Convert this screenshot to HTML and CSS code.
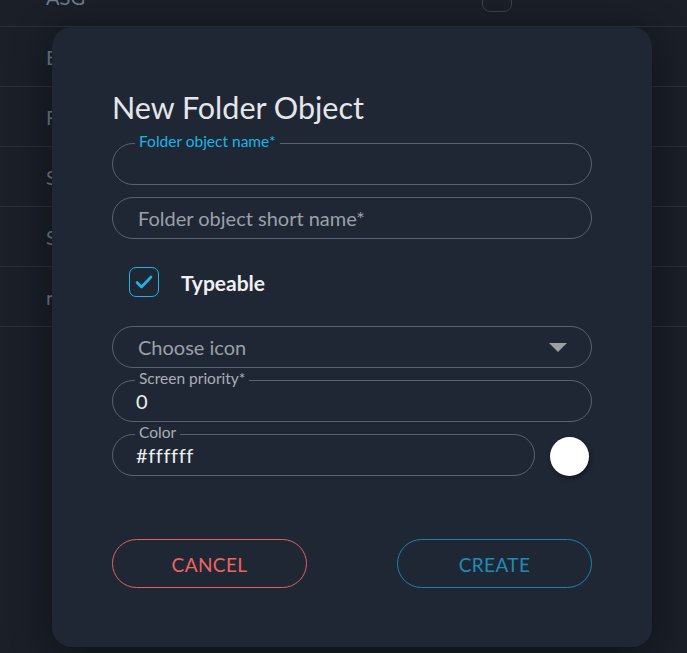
FILE: index.html
```html
<!DOCTYPE html>
<html lang="en">
<head>
<meta charset="utf-8">
<title>New Folder Object</title>
<link rel="stylesheet" href="styles.css">
</head>
<body>
<div class="page">
  <ul class="list">
    <li class="row"><span class="row-name">ASG</span><span class="row-check"></span></li>
    <li class="row"><span class="row-name">Engineering</span><span class="row-check"></span></li>
    <li class="row"><span class="row-name">Finance</span><span class="row-check"></span></li>
    <li class="row"><span class="row-name">Sales</span><span class="row-check"></span></li>
    <li class="row"><span class="row-name">Support</span><span class="row-check"></span></li>
    <li class="row"><span class="row-name">root</span><span class="row-check"></span></li>
  </ul>

  <div class="dialog">
    <h1 class="title">New Folder Object</h1>

    <div class="field focused">
      <span class="float-label">Folder object name*</span>
    </div>

    <div class="field gap">
      <span class="placeholder">Folder object short name*</span>
    </div>

    <label class="check-row">
      <span class="checkbox">
        <svg width="20" height="16" viewBox="0 0 20 16"><path d="M3 8.5 L7.5 13 L17 3" fill="none" stroke="#1ab4e8" stroke-width="2.6" stroke-linecap="round" stroke-linejoin="round"/></svg>
      </span>
      <span class="check-text">Typeable</span>
    </label>

    <div class="field select">
      <span class="placeholder">Choose icon</span>
      <span class="arrow"></span>
    </div>

    <div class="field gap">
      <span class="float-label muted">Screen priority*</span>
      <span class="value">0</span>
    </div>

    <div class="color-row">
      <div class="field color-field">
        <span class="float-label muted">Color</span>
        <span class="value">#ffffff</span>
      </div>
      <span class="swatch"></span>
    </div>

    <div class="actions">
      <button class="btn cancel">CANCEL</button>
      <button class="btn create">CREATE</button>
    </div>
  </div>
</div>
</body>
</html>
```
FILE: styles.css
```css
* { box-sizing: border-box; }
html, body { margin: 0; padding: 0; }
body {
  width: 687px;
  height: 653px;
  overflow: hidden;
  background: #1a1f28;
  font-family: Lato, "Noto Sans", sans-serif;
}
.page {
  position: relative;
  width: 687px;
  height: 653px;
  overflow: hidden;
  background: #1a1f28;
}
.list {
  list-style: none;
  margin: -33px 0 0 0;
  padding: 0;
}
.row {
  height: 60px;
  border-bottom: 1px solid #2b313c;
  display: flex;
  align-items: center;
  padding-left: 46px;
  position: relative;
}
.row-name {
  color: #6f7a8c;
  font-size: 20px;
  flex: 1;
}
.row-check {
  width: 30px;
  height: 30px;
  border: 1px solid #3a414e;
  border-radius: 8px;
  margin-right: 175px;
}
.dialog {
  position: absolute;
  left: 52px;
  top: 27px;
  width: 600px;
  height: 620px;
  background: #202734;
  border-radius: 20px;
  box-shadow: 0 8px 40px rgba(0, 0, 0, 0.45);
  padding: 63px 60px 0 60px;
}
.title {
  margin: 0;
  font-size: 30.5px;
  line-height: 34px;
  font-weight: 400;
  color: #e4e6ea;
}
.field {
  position: relative;
  height: 42px;
  border: 1px solid #596170;
  border-radius: 21px;
  display: flex;
  align-items: center;
  padding: 0 24px;
  margin-top: 19px;
}
.field.gap { margin-top: 12px; }
.float-label {
  position: absolute;
  left: 22px;
  top: -12px;
  padding: 0 4px;
  background: #202734;
  font-size: 15.5px;
  line-height: 18px;
  color: #1ab4e8;
}
.float-label.muted { color: #a9aeb6; }
.placeholder {
  font-size: 20px;
  color: #9aa0a9;
  margin-left: 1px;
  margin-bottom: 1px;
}
.value {
  font-size: 20px;
  letter-spacing: 0.6px;
  color: #eceef0;
  margin-left: -1px;
}
.check-row {
  display: flex;
  align-items: center;
  margin-top: 28px;
  padding-left: 17px;
  height: 30px;
}
.checkbox {
  width: 30px;
  height: 30px;
  border: 1.5px solid #1ab4e8;
  border-radius: 7px;
  display: flex;
  align-items: center;
  justify-content: center;
}
.check-text {
  margin-left: 22px;
  font-size: 21px;
  font-weight: 700;
  color: #eef0f2;
}
.field.select {
  margin-top: 29px;
  justify-content: space-between;
  padding-right: 24px;
}
.arrow {
  width: 0;
  height: 0;
  border-left: 9px solid transparent;
  border-right: 9px solid transparent;
  border-top: 9px solid #9e9fa3;
}
.color-row {
  display: flex;
  align-items: center;
  margin-top: 12px;
}
.color-row .field { margin-top: 0; }
.color-field { width: 423px; }
.swatch {
  width: 39px;
  height: 39px;
  border-radius: 50%;
  background: #ffffff;
  margin-left: 15px;
  margin-top: 3px;
  box-shadow: 1px 2px 4px rgba(0, 0, 0, 0.5);
}
.actions {
  display: flex;
  justify-content: space-between;
  margin-top: 63px;
}
.btn {
  width: 195px;
  height: 49px;
  border-radius: 25px;
  background: transparent;
  font-family: Lato, "Noto Sans", sans-serif;
  font-size: 19px;
  letter-spacing: 0.4px;
  padding: 2px 0 0 0;
  cursor: pointer;
}
.btn.cancel {
  border: 1px solid #e0605e;
  color: #ec6462;
}
.btn.create {
  border: 1px solid #1686ae;
  color: #1a8db8;
}
```
